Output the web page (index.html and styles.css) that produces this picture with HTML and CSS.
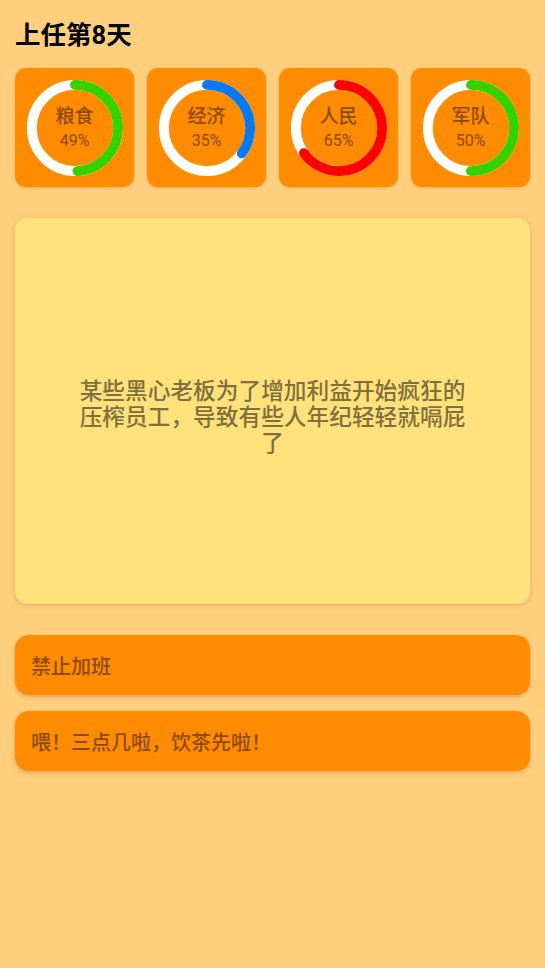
FILE: index.html
```html
<!DOCTYPE html>
<html lang="zh-CN">

<head>
    <meta charset="UTF-8">
    <meta name="viewport" content="width=device-width, initial-scale=1.0">
    <title>上任第8天</title>
    <link rel="stylesheet" href="styles.css">
</head>

<body>
    <div class="page">
        <h1 class="day">上任第8天</h1>

        <div class="stats">
            <div class="stat">
                <svg class="ring" viewBox="0 0 100 100">
                    <circle class="track" cx="50" cy="50" r="44"></circle>
                    <circle class="bar green" cx="50" cy="50" r="44" stroke-dasharray="135.47 300"></circle>
                </svg>
                <div class="label">
                    <span class="name">粮食</span>
                    <span class="value">49%</span>
                </div>
            </div>
            <div class="stat">
                <svg class="ring" viewBox="0 0 100 100">
                    <circle class="track" cx="50" cy="50" r="44"></circle>
                    <circle class="bar blue" cx="50" cy="50" r="44" stroke-dasharray="96.76 300"></circle>
                </svg>
                <div class="label">
                    <span class="name">经济</span>
                    <span class="value">35%</span>
                </div>
            </div>
            <div class="stat">
                <svg class="ring" viewBox="0 0 100 100">
                    <circle class="track" cx="50" cy="50" r="44"></circle>
                    <circle class="bar red" cx="50" cy="50" r="44" stroke-dasharray="179.7 300"></circle>
                </svg>
                <div class="label">
                    <span class="name">人民</span>
                    <span class="value">65%</span>
                </div>
            </div>
            <div class="stat">
                <svg class="ring" viewBox="0 0 100 100">
                    <circle class="track" cx="50" cy="50" r="44"></circle>
                    <circle class="bar green" cx="50" cy="50" r="44" stroke-dasharray="138.23 300"></circle>
                </svg>
                <div class="label">
                    <span class="name">军队</span>
                    <span class="value">50%</span>
                </div>
            </div>
        </div>

        <div class="event">
            <p>某些黑心老板为了增加利益开始疯狂的压榨员工，导致有些人年纪轻轻就嗝屁了</p>
        </div>

        <div class="choices">
            <button class="choice">禁止加班</button>
            <button class="choice">喂！三点几啦，饮茶先啦！</button>
        </div>
    </div>
</body>

</html>
```

FILE: styles.css
```css
* {
    margin: 0;
    padding: 0;
    box-sizing: border-box;
}

body {
    background-color: #ffcf7e;
    font-family: Roboto, "Noto Sans CJK SC", sans-serif;
    min-height: 100vh;
}

.page {
    padding: 18px 15px;
    display: flex;
    flex-direction: column;
}

.day {
    font-size: 25.5px;
    font-weight: 700;
    line-height: 34px;
    color: #000;
    margin-bottom: 16px;
}

.stats {
    display: grid;
    grid-template-columns: repeat(4, 1fr);
    gap: 13px;
}

.stat {
    height: 119px;
    background-color: #ff8c00;
    border-radius: 11px;
    box-shadow: 0 1px 3px rgba(150, 80, 0, 0.25);
    display: grid;
    place-items: center;
}

.ring,
.label {
    grid-area: 1 / 1;
}

.ring {
    width: 98px;
    height: 98px;
    transform: rotate(-90deg);
}

.ring circle {
    fill: none;
    stroke-width: 10;
}

.track {
    stroke: #fff;
}

.bar {
    stroke-linecap: round;
}

.green {
    stroke: #36d100;
}

.blue {
    stroke: #0a78ee;
}

.red {
    stroke: #ff0000;
}

.label {
    display: flex;
    flex-direction: column;
    align-items: center;
    color: #8b4a00;
    padding-top: 2px;
}

.name {
    font-size: 19px;
    font-weight: 500;
    line-height: 24px;
}

.value {
    font-size: 16px;
    line-height: 24px;
}

.event {
    margin-top: 31px;
    height: 386px;
    background-color: #ffe27b;
    border-radius: 12px;
    box-shadow: 0 1px 4px rgba(150, 90, 0, 0.3);
    display: flex;
    align-items: center;
    justify-content: center;
    padding: 14px 60px 0;
}

.event p {
    font-size: 22.7px;
    font-weight: 500;
    line-height: 26px;
    color: #7f703d;
    text-align: center;
}

.choices {
    margin-top: 31px;
    display: flex;
    flex-direction: column;
    gap: 16px;
}

.choice {
    height: 60px;
    border: none;
    border-radius: 14px;
    background-color: #ff8c00;
    box-shadow: 0 2px 4px rgba(150, 80, 0, 0.3);
    color: #8b4a00;
    font-family: Roboto, "Noto Sans CJK SC", sans-serif;
    font-size: 20px;
    font-weight: 500;
    text-align: left;
    padding: 0 16px;
}
```
